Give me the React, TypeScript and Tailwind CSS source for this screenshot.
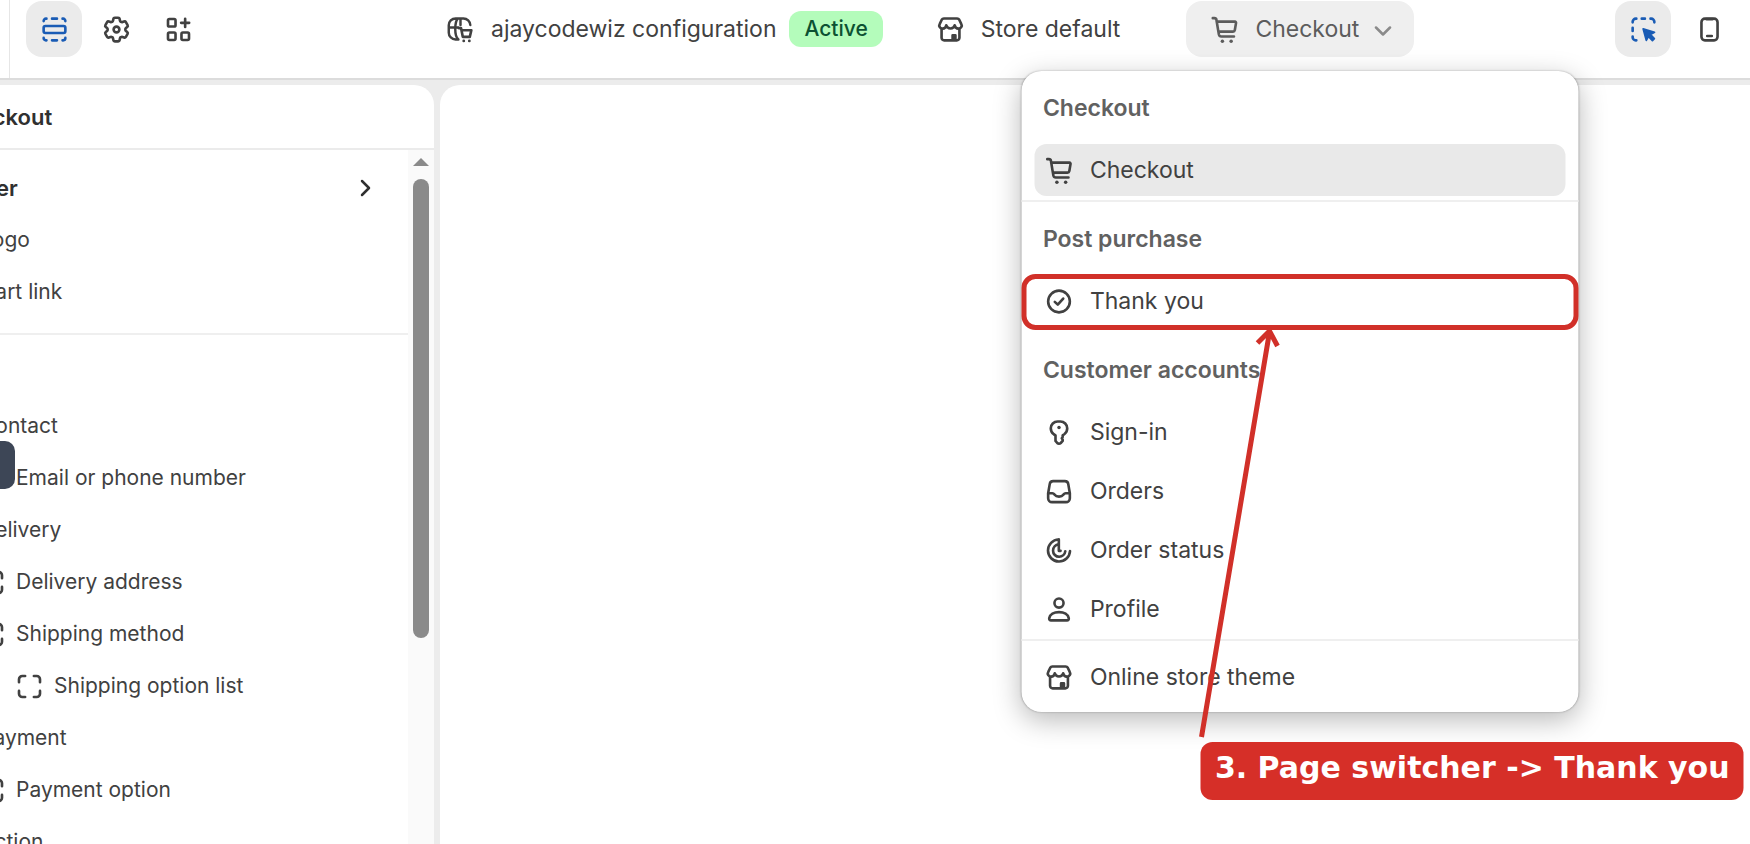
import type { ReactNode } from "react";

type IconProps = { children: ReactNode; className?: string };

function Icon({ children, className = "" }: IconProps) {
  return (
    <svg
      viewBox="0 0 20 20"
      className={`size-[35px] shrink-0 ${className}`}
      fill="none"
      stroke="currentColor"
      strokeWidth="1.5"
      strokeLinecap="round"
      strokeLinejoin="round"
      aria-hidden="true"
    >
      {children}
    </svg>
  );
}

const SectionsIcon = () => (
  <Icon>
    <rect x="3.8" y="8" width="12.4" height="4" rx="1" />
    <path d="M3.8 5.2v-.1a1.3 1.3 0 0 1 1.3-1.3h.3M8.6 3.8h2.8M14.6 3.8h.3a1.3 1.3 0 0 1 1.3 1.3v.1M3.8 14.8v.1a1.3 1.3 0 0 0 1.3 1.3h.3M8.6 16.2h2.8M14.6 16.2h.3a1.3 1.3 0 0 0 1.3-1.3v-.1" />
  </Icon>
);

const GearIcon = () => (
  <Icon>
    <g transform="translate(10 10) scale(.75) translate(-12 -12)" strokeWidth="2">
      <path d="M9.594 3.94c.09-.542.56-.94 1.11-.94h2.593c.55 0 1.02.398 1.11.94l.213 1.281c.063.374.313.686.645.87.074.04.147.083.22.127.325.196.72.257 1.075.124l1.217-.456a1.125 1.125 0 0 1 1.37.49l1.296 2.247a1.125 1.125 0 0 1-.26 1.431l-1.003.827c-.293.241-.438.613-.43.992a7.723 7.723 0 0 1 0 .255c-.008.378.137.75.43.991l1.004.827c.424.35.534.955.26 1.43l-1.298 2.247a1.125 1.125 0 0 1-1.369.491l-1.217-.456c-.355-.133-.75-.072-1.076.124a6.47 6.47 0 0 1-.22.128c-.331.183-.581.495-.644.869l-.213 1.281c-.09.543-.56.94-1.11.94h-2.594c-.55 0-1.019-.398-1.11-.94l-.213-1.281c-.062-.374-.312-.686-.644-.87a6.52 6.52 0 0 1-.22-.127c-.325-.196-.72-.257-1.076-.124l-1.217.456a1.125 1.125 0 0 1-1.369-.49l-1.297-2.247a1.125 1.125 0 0 1 .26-1.431l1.004-.827c.292-.24.437-.613.43-.991a6.932 6.932 0 0 1 0-.255c.007-.38-.138-.751-.43-.992l-1.004-.827a1.125 1.125 0 0 1-.26-1.43l1.297-2.247a1.125 1.125 0 0 1 1.37-.491l1.216.456c.356.133.751.072 1.076-.124.072-.044.146-.086.22-.128.332-.183.582-.495.644-.869l.214-1.28Z" />
      <circle cx="12" cy="12" r="2.2" />
    </g>
  </Icon>
);

const AppsIcon = () => (
  <Icon>
    <rect x="4" y="4" width="4.3" height="4.3" rx=".8" />
    <rect x="4" y="11.7" width="4.3" height="4.3" rx=".8" />
    <rect x="11.7" y="11.7" width="4.3" height="4.3" rx=".8" />
    <path d="M13.8 3.9v4.6M11.5 6.2h4.6" />
  </Icon>
);

const MarketIcon = () => (
  <Icon>
    <path d="M15.6 7.4a3.900 3.900 0 0 0-3.900-3.700H7.2a3.9 3.9 0 0 0-3.9 3.9v4.2a3.9 3.9 0 0 0 3.9 3.9h1.6M3.5 8.8h5.2M8.4 3.8c-1 1.200-1.400 3.600-1.400 5.900s.4 4.600 1.600 5.800M10 3.800v3.600" strokeWidth="1.4" />
    <path d="M9 9.200h1.300l1 5h4l.9-3.800h-5.400M11.800 16.500h.1M15 16.500h.1" strokeWidth="1.500" />
  </Icon>
);

const StoreIcon = () => (
  <Icon>
    <path d="M6.200 3.700h7.600a1.400 1.400 0 0 1 1.200.7l1.200 2.500a1.800 1.800 0 0 1-1.300 2.600c-1.300.2-2.200-.6-2.500-1.900-.3 1.200-1.200 1.800-2.400 1.800s-2.100-.6-2.400-1.800c-.3 1.300-1.200 2.100-2.500 1.900a1.800 1.800 0 0 1-1.300-2.600l1.200-2.500a1.400 1.400 0 0 1 1.200-.7Z" />
    <path d="M4.900 10v4.700a1.500 1.500 0 0 0 1.500 1.500h7.200a1.500 1.500 0 0 0 1.500-1.500V10" />
    <path d="M11.200 15.700v-2.400h1.600v2.400Z" fill="currentColor" />
  </Icon>
);

const CartIcon = () => (
  <Icon>
    <path d="M3.300 3.500h.9a1.200 1.200 0 0 1 1.200 1l.2 1.200.9 5.500h8.300a1.100 1.100 0 0 0 1.100-.9l.7-4.100a.6.6 0 0 0-.6-.7H5.500M6.500 11.200l.3 1.700a1.400 1.400 0 0 0 1.400 1.100h7.200" strokeWidth="1.500" />
    <circle cx="8.800" cy="16.700" r="1" fill="currentColor" stroke="none" />
    <circle cx="13.800" cy="16.700" r="1" fill="currentColor" stroke="none" />
  </Icon>
);

const CheckIcon = () => (
  <Icon>
    <circle cx="10" cy="10" r="6.200" />
    <path d="m7.600 10.200 1.700 1.600 3.100-3.500" />
  </Icon>
);

const KeyIcon = () => (
  <Icon>
    <path d="M8 11.600 7 11A4.100 4.100 0 0 1 5.300 7.600a3.900 3.900 0 0 1 3.900-3.900h1.600a3.900 3.900 0 0 1 3.900 3.900A4.100 4.100 0 0 1 13 11l-.9.600v1l-.5.700.5.800v.700L11 16a1.400 1.400 0 0 1-2 0l-1-1.200Z" />
    <circle cx="10" cy="7.200" r="1" fill="currentColor" stroke="none" />
  </Icon>
);

const OrdersIcon = () => (
  <Icon>
    <path d="M6.700 4.100h6.600a2 2 0 0 1 2 1.700l.9 5.200v2.900a2.200 2.200 0 0 1-2.200 2.200H6a2.200 2.200 0 0 1-2.200-2.200V11l.9-5.200a2 2 0 0 1 2-1.700Z" />
    <path d="M3.900 11h2.300c.6 0 .9.300 1.300.8.500.7 1.200 1.100 2.500 1.100s2-.4 2.500-1.100c.4-.5.700-.8 1.300-.8h2.300" />
  </Icon>
);

const StatusIcon = () => (
  <Icon>
    <path d="M9.800 3.700a6.300 6.300 0 1 0 6.500 6.600" />
    <path d="M9.800 6.500a3.600 3.600 0 0 0-3.200 3.600 3.500 3.500 0 0 0 3.500 3.500 3.600 3.600 0 0 0 3.500-3.200" />
    <path d="M9.900 3.700v6.500h1" />
  </Icon>
);

const ProfileIcon = () => (
  <Icon>
    <circle cx="10" cy="6.300" r="2.600" />
    <path d="M4.400 15c.4-2.200 2.700-3.500 5.600-3.500s5.200 1.300 5.600 3.500c.1.700-.4 1.200-1 1.200H5.400c-.6 0-1.100-.5-1-1.200Z" />
  </Icon>
);

const FrameIcon = ({ className }: { className?: string }) => (
  <Icon className={className}>
    <path d="M4 7.500V5.900A1.900 1.900 0 0 1 5.900 4h1.600M12.500 4h1.600A1.900 1.900 0 0 1 16 5.900v1.600M16 12.500v1.600a1.900 1.900 0 0 1-1.900 1.900h-1.600M7.500 16H5.900A1.900 1.900 0 0 1 4 14.100v-1.600" />
  </Icon>
);

const InspectIcon = () => (
  <Icon>
    <path d="M3.800 5.900v-.3a1.800 1.800 0 0 1 1.800-1.800h.3M9 3.800h1.800M14 3.800h.4a1.800 1.800 0 0 1 1.800 1.800v.3M3.800 9v1.800M3.800 14v.4a1.800 1.800 0 0 0 1.800 1.800h.3" />
    <path d="m9.800 9.600 6.500 2-2.300 1.300 2.200 2.300-1.100 1.100-2.300-2.300-1.200 2.200Z" fill="currentColor" strokeWidth="1" />
  </Icon>
);

const MobileIcon = () => (
  <Icon>
    <rect x="5.400" y="3.800" width="9.200" height="12.400" rx="2" />
    <path d="M8.700 13.700h2.600M8.300 4.100h3.400" />
  </Icon>
);

type MenuItem = { label: string; icon: () => ReactNode; selected?: boolean; marked?: boolean };

type MenuSection = { title?: string; className: string; items: MenuItem[] };

const menuSections: MenuSection[] = [
  {
    title: "Checkout",
    className: "border-b-2 border-[#efefef] pt-[11px] pb-1",
    items: [{ label: "Checkout", icon: CartIcon, selected: true }],
  },
  {
    title: "Post purchase",
    className: "border-b-2 border-transparent pt-[11px] pb-1",
    items: [{ label: "Thank you", icon: CheckIcon, marked: true }],
  },
  {
    title: "Customer accounts",
    className: "border-b-2 border-[#efefef] pt-[11px] pb-1",
    items: [
      { label: "Sign-in", icon: KeyIcon },
      { label: "Orders", icon: OrdersIcon },
      { label: "Order status", icon: StatusIcon },
      { label: "Profile", icon: ProfileIcon },
    ],
  },
  { className: "pt-2.5 pb-[9px]", items: [{ label: "Online store theme", icon: StoreIcon }] },
];

function PageMenu() {
  return (
    <div className="absolute top-[70px] left-1/2 z-10 w-[557px] -translate-x-1/2 rounded-[20px] bg-white text-[#414141] shadow-[0_0_2px_rgba(0,0,0,0.3),0_8px_28px_rgba(0,0,0,0.28)]">
      {menuSections.map((section, i) => (
        <section key={i} className={`px-[13px] ${section.className}`}>
          {section.title && (
            <h2 className="mb-2.5 flex h-[52px] items-center px-2 font-semibold text-[#616161]">{section.title}</h2>
          )}
          <div className="flex flex-col gap-[7px]">
            {section.items.map((item) => (
              <button
                key={item.label}
                type="button"
                className={`relative flex h-[52px] w-full items-center gap-[13px] rounded-xl px-[7px] text-left ${
                  item.selected ? "bg-[#e9e9e9]" : ""
                }`}
              >
                <item.icon />
                <span>{item.label}</span>
                {item.marked && (
                  <span className="absolute -inset-x-[13px] -top-px -bottom-[3px] rounded-[14px] border-[5px] border-[#d13029]" />
                )}
              </button>
            ))}
          </div>
        </section>
      ))}
      <svg
        className="absolute top-[257px] left-[170px] h-[414px] w-[100px]"
        viewBox="0 0 100 414"
        fill="none"
        stroke="#d13029"
        strokeWidth="5"
        aria-hidden="true"
      >
        <path d="M10 409 78 4M66 15 78 3l8 15" />
      </svg>
      <p className="absolute top-[671px] left-[179px] flex h-[58px] items-center rounded-xl bg-[#d62f28] px-[14px] pb-1.5 font-['DejaVu_Sans'] text-[30px] font-bold whitespace-nowrap text-white">
        3. Page switcher -&gt; Thank you
      </p>
    </div>
  );
}

function TopBar() {
  return (
    <header className="relative z-10 flex h-[80px] shrink-0 items-start border-b-2 border-[#dcdcdc] bg-white">
      <div className="flex w-[443px] shrink-0 self-stretch pl-[9px]">
        <nav className="flex gap-1.5 border-l border-[#e6e6e6] pt-px pl-4">
          <button type="button" aria-label="Sections" className="grid size-14 place-items-center rounded-2xl bg-[#ebebeb] text-[#1a5cb5]">
            <SectionsIcon />
          </button>
          <button type="button" aria-label="Settings" className="grid size-14 place-items-center">
            <GearIcon />
          </button>
          <button type="button" aria-label="Apps" className="grid size-14 place-items-center">
            <AppsIcon />
          </button>
        </nav>
      </div>
      <div className="flex shrink-0 items-center pt-px">
        <button type="button" className="flex h-14 items-center gap-[13px]">
          <MarketIcon />
          <span>ajaycodewiz configuration</span>
          <span className="flex h-9 items-center rounded-xl bg-[#b4fcbb] px-[15px] text-[21px] font-medium text-[#0c5132]">
            Active
          </span>
        </button>
        <button type="button" className="ml-[50px] flex h-14 items-center gap-[13px]">
          <StoreIcon />
          <span>Store default</span>
        </button>
        <div className="relative ml-[66px]">
          <button
            type="button"
            aria-haspopup="menu"
            aria-expanded="true"
            className="flex h-14 w-[228px] items-center gap-[13px] rounded-2xl bg-[#efefef] pl-[21px] text-[#5c5c5c]"
          >
            <CartIcon />
            <span>Checkout</span>
            <svg viewBox="0 0 18 10" className="mt-1 ml-0.5 h-2.5 w-[18px]" fill="none" stroke="#8a8a8a" strokeWidth="2.500" strokeLinecap="round" strokeLinejoin="round" aria-hidden="true">
              <path d="m2 1.500 7 7 7-7" />
            </svg>
          </button>
          <PageMenu />
        </div>
      </div>
      <div className="ml-auto flex shrink-0 gap-2.5 pt-px pr-[13px]">
        <button type="button" aria-label="Inspector" className="grid size-14 place-items-center rounded-2xl bg-[#ebebeb] text-[#1a5cb5]">
          <InspectIcon />
        </button>
        <button type="button" aria-label="Mobile preview" className="grid size-14 place-items-center">
          <MobileIcon />
        </button>
      </div>
    </header>
  );
}

type Row = { label: string; level: 0 | 1 | 2; hideIcon?: boolean };

const headerRows: Row[] = [
  { label: "Logo", level: 0 },
  { label: "Cart link", level: 0 },
];

const mainRows: Row[] = [
  { label: "Contact", level: 0 },
  { label: "Email or phone number", level: 1, hideIcon: true },
  { label: "Delivery", level: 0 },
  { label: "Delivery address", level: 1 },
  { label: "Shipping method", level: 1 },
  { label: "Shipping option list", level: 2 },
  { label: "Payment", level: 0 },
  { label: "Payment option", level: 1 },
  { label: "Action", level: 0 },
];

const indents = ["pl-[32px]", "pl-[68px]", "pl-[106px]"];

function TreeRows({ rows }: { rows: Row[] }) {
  return (
    <ul>
      {rows.map(({ label, level, hideIcon }) => (
        <li key={label} className={`flex h-[52px] items-center gap-[7px] ${indents[level]}`}>
          <FrameIcon className={hideIcon ? "invisible" : ""} />
          <span>{label}</span>
        </li>
      ))}
    </ul>
  );
}

function Sidebar() {
  return (
    <aside className="relative -ml-[94px] flex w-[528px] shrink-0 flex-col overflow-hidden rounded-tr-[20px] bg-white text-[21px]">
      <h1 className="flex h-[65px] shrink-0 items-center border-b-2 border-[#ebebeb] pl-[44px] text-[22px] font-semibold text-[#303030]">
        Checkout
      </h1>
      <div className="flex min-h-0 flex-1">
        <div className="min-w-0 flex-1 overflow-hidden">
          <div className="border-b-2 border-[#efefef] pt-3 pb-[15px]">
            <h2 className="flex h-[52px] items-center justify-between pr-9 pl-[34px] text-[22px] font-semibold text-[#303030]">
              Header
              <svg viewBox="0 0 12 18" className="h-[18px] w-3" fill="none" stroke="currentColor" strokeWidth="2.500" strokeLinecap="round" strokeLinejoin="round" aria-hidden="true">
                <path d="m2 2 7 7-7 7" />
              </svg>
            </h2>
            <TreeRows rows={headerRows} />
          </div>
          <h2 className="flex h-[65px] items-center pl-3 font-semibold">Main</h2>
          <TreeRows rows={mainRows} />
        </div>
        <div className="flex w-[26px] shrink-0 flex-col items-center gap-[13px] bg-[#fafafa] pt-2 pr-px">
          <svg viewBox="0 0 16 8" className="h-2 w-4 shrink-0" fill="#8a8a8a" aria-hidden="true">
            <path d="M8 0 16 8H0Z" />
          </svg>
          <div className="h-[459px] w-4 shrink-0 rounded-full bg-[#8a8a8a]" />
        </div>
      </div>
      <div className="absolute top-[356px] left-[61px] h-12 w-12 rounded-[10px] bg-[#3d4656]" />
    </aside>
  );
}

export default function App() {
  return (
    <div className="flex h-screen flex-col overflow-hidden bg-[#ececec] font-['Inter','Liberation_Sans',sans-serif] text-[23px] leading-7 text-[#414141]">
      <TopBar />
      <main className="flex min-h-0 flex-1 gap-1.5 pt-[5px]">
        <Sidebar />
        <section aria-label="Preview" className="min-w-0 flex-1 rounded-tl-[20px] bg-white" />
      </main>
    </div>
  );
}
